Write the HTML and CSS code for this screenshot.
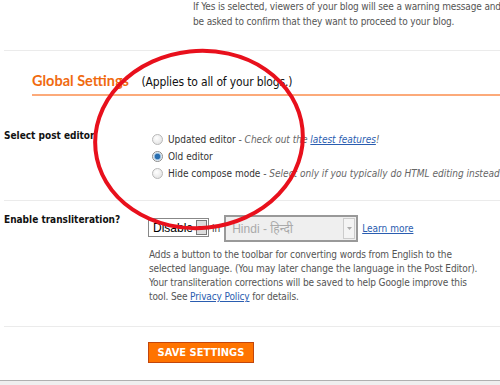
FILE: index.html
```html
<!DOCTYPE html>
<html>
<head>
<meta charset="utf-8">
<link rel="stylesheet" href="styles.css">
</head>
<body>
<div class="page">
  <div class="top-row">
    <div class="top-label"></div>
    <p class="note">If Yes is selected, viewers of your blog will see a warning message and<br>be asked to confirm that they want to proceed to your blog.</p>
  </div>
  <hr class="sep sep-top">
  <div class="global">
    <h2 class="global-title">Global Settings <span class="applies">(Applies to all of your blogs.)</span></h2>
  </div>
  <div class="row editor-row">
    <div class="label">Select post editor</div>
    <div class="field radios">
      <label class="radio"><span class="rb"></span>Updated editor <span class="hint">- Check out the <a href="#">latest features</a>!</span></label>
      <label class="radio"><span class="rb on"></span>Old editor</label>
      <label class="radio"><span class="rb"></span>Hide compose mode <span class="hint">- Select only if you typically do HTML editing instead of</span></label>
    </div>
  </div>
  <hr class="sep">
  <div class="row translit-row">
    <div class="label">Enable transliteration?</div>
    <div class="field">
      <div class="controls">
        <div class="sel sel-small"><span class="sel-text">Disable</span><span class="sel-btn"><svg width="7" height="4" viewBox="0 0 7 4"><path d="M0 0h7L3.5 4z" fill="#000"/></svg></span></div>
        <span class="in">in</span>
        <div class="sel sel-lang"><span class="sel-text">Hindi - हिन्दी</span><span class="sel-btn2"><svg width="5" height="3" viewBox="0 0 5 3"><path d="M0 0h5L2.5 3z" fill="#aaa"/></svg></span></div>
        <a href="#" class="learn">Learn more</a>
      </div>
      <p class="desc">Adds a button to the toolbar for converting words from English to the<br>selected language. (You may later change the language in the Post Editor).<br>Your transliteration corrections will be saved to help Google improve this<br>tool. See <a href="#">Privacy Policy</a> for details.</p>
    </div>
  </div>
  <hr class="sep">
  <div class="row save-row">
    <div class="label"></div>
    <div class="field"><button class="save">SAVE SETTINGS</button></div>
  </div>
  <div class="footer-bar"></div>
  <svg class="circle" width="500" height="385" viewBox="0 0 500 385">
    <ellipse cx="199" cy="139.5" rx="104" ry="88.5" transform="rotate(-6 199 139.5)" fill="none" stroke="#e8101c" stroke-width="4"/>
  </svg>
</div>
</body>
</html>
```
FILE: styles.css
```css
* { box-sizing: border-box; }
body { margin: 0; background: #fff; font-family: "DejaVu Sans Condensed", "DejaVu Sans", Tahoma, sans-serif; font-size: 10px; color: #555; }
.page { position: relative; width: 500px; height: 385px; overflow: hidden; }
.top-row { display: flex; }
.top-label { width: 193px; flex: none; }
.note { margin: -1px 0 0; line-height: 15px; white-space: nowrap; color: #555; letter-spacing: -0.14px; }
.sep { border: 0; border-top: 1px solid #ebebeb; margin: 0 0 0 4px; }
.sep-top { margin-top: 21px; }
.global { padding: 21px 0 0 32px; }
.global-title { margin: 0; font-family: Lato, "Liberation Sans", sans-serif; font-size: 14.5px; font-weight: bold; color: #f06a0f; border-bottom: 2px solid #fcaa7a; padding-bottom: 3px; line-height: 18px; white-space: nowrap; }
.applies { font-family: "DejaVu Sans Condensed", sans-serif; font-weight: normal; color: #111; font-size: 12px; margin-left: 9px; letter-spacing: -0.15px; }
.row { display: flex; }
.label { width: 148px; flex: none; padding-left: 4px; font-weight: bold; color: #111; line-height: 14px; white-space: nowrap; }
.field { flex: 1; min-width: 0; }
.editor-row { padding: 33px 0 18.5px; }
.radios { padding-top: 3px; padding-left: 4px; display: flex; flex-direction: column; gap: 2px; }
.radio { display: block; white-space: nowrap; height: 15px; line-height: 15px; color: #333; }
.rb { display: inline-block; vertical-align: -2px; width: 11px; height: 11px; border-radius: 50%; border: 1px solid #b8b8b8; background: radial-gradient(circle at 40% 35%, #fff, #ddd); margin-right: 5px; }
.rb.on { background: radial-gradient(circle, #2a6fb0 0 2.5px, #8fb8dc 3px, #fff 4.5px, #e4e4e4); border-color: #8a8a8a; }
.hint { font-style: italic; color: #666; }
a { color: #2a5db0; }
.translit-row { padding: 12px 0 21.8px; }
.translit-row .field { padding-top: 2px; }
.controls { display: flex; align-items: center; height: 27px; }
.sel { display: flex; align-items: center; border: 1px solid #888; }
.sel-small { width: 61px; height: 19px; background: #fff; color: #000; padding-left: 4px; font-family: "Liberation Sans", sans-serif; font-size: 12px; margin-top: -1px; }
.sel-small .sel-text { flex: 1; }
.sel-btn { width: 11px; height: 15px; border: 1px solid #777; background: #ddd; display: flex; align-items: center; justify-content: center; margin-right: 1px; }
.in { margin: 0 4px 0 3px; color: #333; font-size: 10px; }
.sel-lang { width: 134px; height: 27px; background: #efefef; border: 2px solid #999; color: #aaa; padding-left: 6px; font-family: "Liberation Sans", "Noto Sans", sans-serif; font-size: 12px; }
.sel-lang .sel-text { flex: 1; }
.sel-btn2 { width: 12px; height: 21px; border: 1px solid #ccc; background: #f4f4f4; display: flex; align-items: center; justify-content: center; margin-right: 1px; }
.learn { margin-left: 4px; font-size: 10px; }
.desc { margin: 6px 0 0 1px; line-height: 14.3px; color: #555; white-space: nowrap; letter-spacing: -0.13px; }
.save-row { padding: 15px 0 0; }
.save { background: #ff7300; border: 1px solid #c2460c; color: #fff; font-family: "DejaVu Sans Condensed", sans-serif; font-weight: bold; font-size: 11px; height: 21px; width: 106px; padding: 0; }
.footer-bar { position: absolute; left: 0; right: 0; top: 380px; height: 5px; border-top: 1px solid #b0b0b0; background: #efefef; }
.circle { position: absolute; left: 0; top: 0; pointer-events: none; }
```
